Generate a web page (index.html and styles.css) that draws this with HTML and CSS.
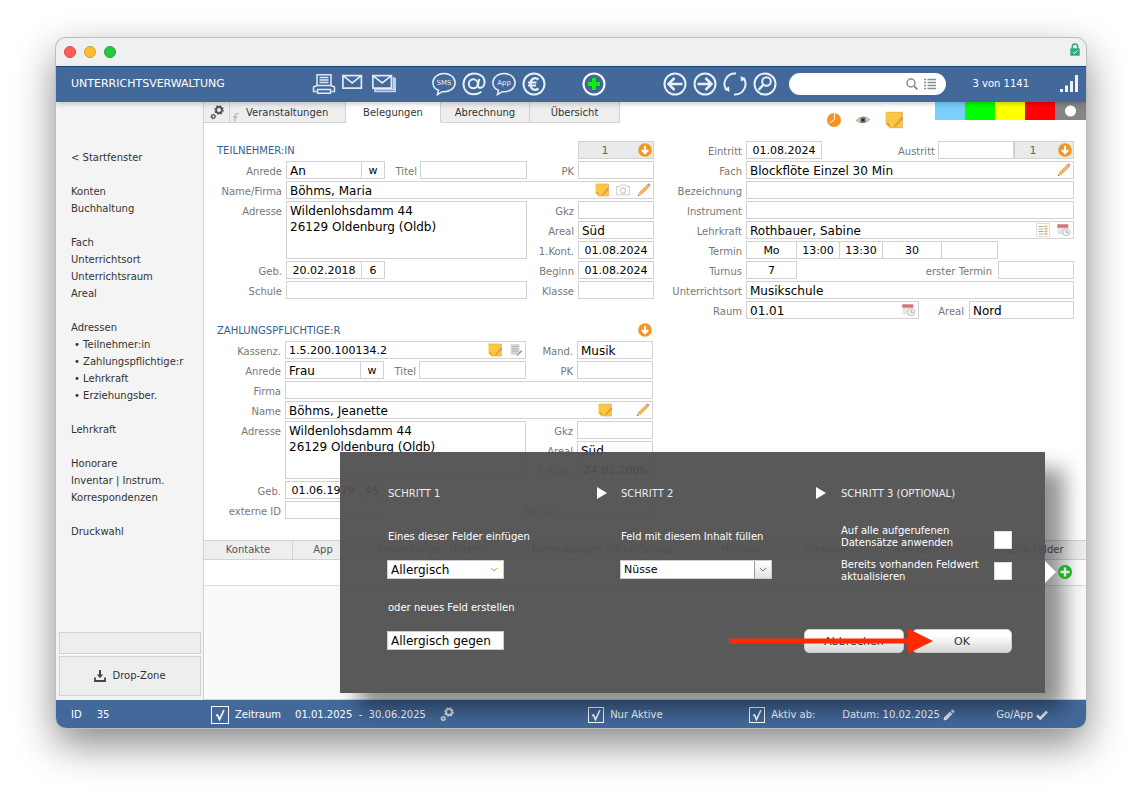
FILE: index.html
```html
<!DOCTYPE html>
<html lang="de">
<head>
<meta charset="utf-8">
<title>Unterrichtsverwaltung</title>
<link rel="stylesheet" href="styles.css">
</head>
<body>
<svg class="sprite" aria-hidden="true">
  <symbol id="down" viewBox="0 0 14 14"><circle cx="7" cy="7" r="6.8" fill="#f7941e"/><path d="M7 2.800v7M3.800 7 7 10.200 10.200 7" fill="none" stroke="#fff" stroke-width="2.100"/></symbol>
  <symbol id="note" viewBox="0 0 14 14"><path d="M.5 1h13v12H3.500l-3-3z" fill="#fbc740"/><path d="M.5 9.500h3.200V13z" fill="#e2a226"/><path d="M.5 1h13v12H3.500" fill="none" stroke="#e0b050" stroke-width=".7"/><path d="m7 11.500 5-6 1.500 1.200-5 5.300-2 .6z" fill="#e99a3d"/><path d="m12 5.500 1-1 1 1-.8 1.200z" fill="#a58fc0"/></symbol>
  <symbol id="pencil" viewBox="0 0 14 14"><path d="m2 9.500 8-8 2.500 2.300-8.200 8L.8 13.200z" fill="#f2a541"/><path d="m3 10.500 8-8" stroke="#fbd089"/><path d="m2 9.500 2.300 2.300-3.500 1.400z" fill="#e6c79c"/><path d="m.8 13.200.6-1.500.9.9z" fill="#444"/><path d="m10 1.500 1-1q1.500-.5 2.500 1.200l-1 2z" fill="#b59ac4"/></symbol>
  <symbol id="camera" viewBox="0 0 14 12"><path d="M.6 2.600h3l1-1.600h4.800l1 1.600h3v8.200H.6z" fill="none" stroke="#ccc"/><circle cx="7" cy="6.500" r="2.600" fill="none" stroke="#ccc" stroke-width="1.200"/></symbol>
  <symbol id="doc" viewBox="0 0 12 12"><path d="M1.500 1h7.500v9H1.500z" fill="#d5d5d5"/><path d="M2.500 3h5.500M2.500 5h5.500M2.500 7h5.500" stroke="#bbb"/><path d="m6 11 4.500-5 1 1-4 4z" fill="#8fa5b8"/></symbol>
  <symbol id="list" viewBox="0 0 14 14"><path d="M.5.500h13v13H.5z" fill="#fff" stroke="#ddd"/><path d="M2.500 3.500h5M2.500 6h5M2.500 8.500h5M2.500 11h5" stroke="#aaa"/><path d="M8.500 3.500h3M8.500 6h3M8.500 8.500h3M8.500 11h3" stroke="#f3ad45" stroke-width="1.500"/></symbol>
  <symbol id="cal" viewBox="0 0 14 13"><path d="M.5 3h10.500v8H.5z" fill="#e6e6e6"/><path d="M.3.800h11v3.400H.3z" fill="#d9717b"/><circle cx="9.300" cy="8.700" r="3.700" fill="#f0f0f0" stroke="#c6c6c6"/><path d="M9.300 6.500v2.400h2" stroke="#aaa" fill="none"/></symbol>
  <symbol id="gears" viewBox="0 0 14 15"><circle cx="9" cy="5" r="3" fill="none" stroke="currentColor" stroke-width="1.900"/><circle cx="9" cy="5" r="4.200" fill="none" stroke="currentColor" stroke-width="1.200" stroke-dasharray="1.700 1.600"/><circle cx="3.300" cy="11.500" r="1.700" fill="none" stroke="currentColor" stroke-width="1.300"/><circle cx="3.300" cy="11.500" r="2.500" fill="none" stroke="currentColor" stroke-width=".7" stroke-dasharray="1.200 1"/></symbol>
  <symbol id="play" viewBox="0 0 10 12"><path d="M0 0 10 6 0 12z" fill="#fff"/></symbol>
</svg>

<div class="window">
  <div class="titlebar">
    <span class="dot red"></span><span class="dot amber"></span><span class="dot green"></span>
    <svg class="lock" viewBox="0 0 10 13"><path d="M2.300 6V3.700a2.700 2.700 0 0 1 5.400 0V6" fill="none" stroke="#35a97a" stroke-width="1.500"/><rect x=".3" y="5.300" width="9.400" height="7.500" rx=".6" fill="#35a97a"/><path d="m3 9 1.500 1.500L7.300 7.500" fill="none" stroke="#fff"/></svg>
  </div>

  <header class="toolbar">
    <h1>UNTERRICHTSVERWALTUNG</h1>
    <div class="tools">
      <button aria-label="Drucken"><svg viewBox="0 0 24 24"><g fill="none" stroke="#dfe8f3" stroke-width="1.500"><path d="M5 13V2.800h14V13M7.500 5.500h9M7.500 8h9M7.500 10.500h9"/><path d="M5 13.500 1.500 15v4.500h3M19 13.500l3.500 1.500v4.500h-3"/><path d="M5.500 17.500h13v3.800h-13zM5 13.500h14"/></g></svg></button>
      <button aria-label="E-Mail"><svg viewBox="0 0 24 24"><path d="M.9 3.700h18.500v12.500H.9zL10.200 11l9.200-7.300" fill="none" stroke="#dfe8f3" stroke-width="1.700"/></svg></button>
      <button aria-label="Serien-E-Mail"><svg viewBox="0 0 24 24"><path d="M3 18v1.500h20.200V6.500H22M2 17.500h19.500V5" fill="none" stroke="#c3d2e5" stroke-width="1.700"/><path d="M.9 3.700h18.500v12.500H.9zL10.200 11l9.200-7.300" fill="none" stroke="#dfe8f3" stroke-width="1.700"/></svg></button>
    </div>
    <div class="tools">
      <button aria-label="SMS"><svg viewBox="0 0 24 24"><path d="M6.500 18.300C3 17 .9 14 .9 10.800.9 5.800 5.500 1.500 12 1.500s11.100 4.300 11.100 9.300-4.600 9-11.100 9q-1 0-1.800-.1L5.500 22.600z" fill="none" stroke="#e8eff7" stroke-width="1.500"/><text x="12" y="13" class="bubble">SMS</text></svg></button>
      <button aria-label="Nachricht"><svg viewBox="0 0 24 24"><circle cx="11.300" cy="11.800" r="4.500" fill="none" stroke="#e8eff7" stroke-width="1.900"/><path d="M17.200 6.800 16 13.500c-.6 3.500 6 3.200 6.500-2.500C23 5 18 1.500 12.500 1.500 6 1.500 1.500 6 1.500 12s4.200 10.300 10 10.300c3.500 0 6-1 8-2.500" fill="none" stroke="#e8eff7" stroke-width="1.900"/></svg></button>
      <button aria-label="App"><svg viewBox="0 0 24 24"><path d="M6.500 18.300C3 17 .9 14 .9 10.800.9 5.800 5.500 1.500 12 1.500s11.100 4.300 11.100 9.300-4.600 9-11.100 9q-1 0-1.800-.1L5.500 22.600z" fill="none" stroke="#e8eff7" stroke-width="1.500"/><text x="12" y="13" class="bubble">App</text></svg></button>
      <button aria-label="Euro"><svg viewBox="0 0 24 24"><circle cx="12" cy="12" r="10.500" fill="none" stroke="#e8eff7" stroke-width="2"/><path d="M16.500 7.500C12.500 4.500 8.500 7 8.500 12s4 7.500 8 4.500M6 10.500h8.500M6 13.500h8" fill="none" stroke="#e8eff7" stroke-width="2.200"/></svg></button>
    </div>
    <div class="tools">
      <button aria-label="Neu"><svg viewBox="0 0 24 24"><circle cx="12" cy="12" r="10.500" fill="none" stroke="#fff" stroke-width="2"/><path d="M12.500 6.500v12M6.500 12.500h12" stroke="#2c5a66" stroke-width="4"/><path d="M12 6v12M6 12h12" stroke="#0df00d" stroke-width="4"/></svg></button>
    </div>
    <div class="tools nav">
      <button aria-label="Zurück"><svg viewBox="0 0 24 24"><g fill="none" stroke="#e8eff7" stroke-width="2"><circle cx="12" cy="12" r="10.500"/><path d="M19.500 12H5.500M11.500 6l-6 6 6 6" stroke-width="2.500"/></g></svg></button>
      <button aria-label="Vor"><svg viewBox="0 0 24 24"><g fill="none" stroke="#e8eff7" stroke-width="2"><circle cx="12" cy="12" r="10.500"/><path d="M4.500 12h14M12.500 6l6 6-6 6" stroke-width="2.500"/></g></svg></button>
      <button aria-label="Aktualisieren"><svg viewBox="0 0 24 24"><g fill="none" stroke="#e8eff7" stroke-width="2"><path d="M13 1.500A10.500 10.500 0 0 0 3.700 18.300M11 22.500A10.500 10.500 0 0 0 20.300 5.700"/></g><path d="m1 17 5.500 3-.5-5.500zM23 7l-5.500-3 .5 5.500z" fill="#e8eff7"/></svg></button>
      <button aria-label="Suchen"><svg viewBox="0 0 24 24"><g fill="none" stroke="#e8eff7" stroke-width="2"><circle cx="12" cy="12" r="10.500"/><circle cx="13.500" cy="9.500" r="4.300"/><path d="m10.500 12.500-5 5.500" stroke-width="2.500"/></g></svg></button>
    </div>
    <div class="search">
      <input type="search" aria-label="Suche">
      <svg class="i-mag" viewBox="0 0 12 12"><circle cx="5" cy="5" r="4" fill="none" stroke="#8a8a8a" stroke-width="1.500"/><path d="m8 8 3.500 3.500" stroke="#8a8a8a" stroke-width="1.800"/></svg>
      <svg class="i-mag" viewBox="0 0 12 12"><path d="M0 1.500h2M0 4.500h2M0 7.500h2M0 10.500h2M3.500 1.500H12M3.500 4.500H12M3.500 7.500H12M3.500 10.500H12" stroke="#8a8a8a" stroke-width="1.300"/></svg>
    </div>
    <span class="counter">3 von 1141</span>
    <svg class="bars" viewBox="0 0 20 20"><path d="M1 15h3v3H1zM6 11.500h3V18H6zM11 7h3v11h-3zM16 1h3v17h-3z" fill="#eef3f9"/></svg>
  </header>

  <div class="body">
    <aside class="sidebar">
      <nav>
        <ul><li><a href="#">&lt; Startfenster</a></li></ul>
        <ul><li><a href="#">Konten</a></li><li><a href="#">Buchhaltung</a></li></ul>
        <ul><li><a href="#">Fach</a></li><li><a href="#">Unterrichtsort</a></li><li><a href="#">Unterrichtsraum</a></li><li><a href="#">Areal</a></li></ul>
        <ul><li><a href="#">Adressen</a></li><li class="sub"><a href="#">• Teilnehmer:in</a></li><li class="sub"><a href="#">• Zahlungspflichtige:r</a></li><li class="sub"><a href="#">• Lehrkraft</a></li><li class="sub"><a href="#">• Erziehungsber.</a></li></ul>
        <ul><li><a href="#">Lehrkraft</a></li></ul>
        <ul><li><a href="#">Honorare</a></li><li><a href="#">Inventar | Instrum.</a></li><li><a href="#">Korrespondenzen</a></li></ul>
        <ul><li><a href="#">Druckwahl</a></li></ul>
      </nav>
      <div class="slot"></div>
      <button class="dropzone"><svg viewBox="0 0 12 12"><path d="M1 7.500v3.500h10V7.500" fill="none" stroke="#444" stroke-width="1.800"/><path d="M6 0v5" stroke="#444" stroke-width="2"/><path d="M2.800 4.500h6.400L6 8.200z" fill="#444"/></svg>Drop-Zone</button>
    </aside>

    <main class="main">
      <div class="top">
        <div class="tabs">
          <button class="tab gear" aria-label="Einstellungen"><svg class="i15"><use href="#gears"/></svg></button>
          <button class="tab wide"><svg class="hook" viewBox="0 0 8 10"><path d="M3 9.500V3.500q0-2 3.500-2M1 5h4.500" fill="none" stroke="#bbb" stroke-width="1.500"/></svg>Veranstaltungen</button>
          <button class="tab active">Belegungen</button>
          <button class="tab">Abrechnung</button>
          <button class="tab last">Übersicht</button>
        </div>
        <div class="status">
          <svg class="i14" viewBox="0 0 14 14"><circle cx="7" cy="7" r="7" fill="#f7941e"/><path d="M7.500 0v6.500L2.800 9.800" fill="none" stroke="#fff"/></svg>
          <svg class="i14" viewBox="0 0 14 14"><path d="M.5 7.500Q6.500 1 13.500 6.500 7 12.500.5 7.500z" fill="#e9dcc6" stroke="#b9874f"/><circle cx="7" cy="7" r="3" fill="#5b7f9d"/><circle cx="7" cy="7" r="1.500" fill="#1c2733"/></svg>
          <svg class="i18"><use href="#note"/></svg>
        </div>
        <div class="colors"><span class="sky"></span><span class="lime"></span><span class="yellow"></span><span class="scarlet"></span><span class="gray"></span></div>
      </div>

      <div class="forms">
        <div class="left">
          <section class="grid">
            <h2>TEILNEHMER:IN</h2>
            <div class="field count"><span>1</span><svg class="i14"><use href="#down"/></svg></div>
            <label for="a1">Anrede</label>
            <div class="row"><input id="a1" class="w76" value="An"><input class="w24 c join" aria-label="Geschlecht" value="w"><label for="a2" class="push">Titel</label><input id="a2" class="w107"></div>
            <label for="a3">PK</label><input id="a3">
            <label for="a4">Name/Firma</label>
            <div class="field span"><input id="a4" value="Böhms, Maria"><svg class="i14"><use href="#note"/></svg><svg class="i14"><use href="#camera"/></svg><svg class="i14"><use href="#pencil"/></svg></div>
            <label for="a5">Adresse</label>
            <textarea id="a5">Wildenlohsdamm 44
26129 Oldenburg (Oldb)</textarea>
            <label for="a6">Gkz</label><input id="a6">
            <label for="a7" class="c3">Areal</label><input id="a7" value="Süd">
            <label for="a8" class="c3">1.Kont.</label><input id="a8" class="c" value="01.08.2024">
            <label for="a9">Geb.</label>
            <div class="row"><input id="a9" class="w76 c" value="20.02.2018"><input class="w24 c join" aria-label="Alter" value="6"></div>
            <label for="a10">Beginn</label><input id="a10" class="c" value="01.08.2024">
            <label for="a11">Schule</label><input id="a11">
            <label for="a12">Klasse</label><input id="a12">
          </section>

          <section class="grid second">
            <h2>ZAHLUNGSPFLICHTIGE:R</h2>
            <div class="bare"><svg class="i14"><use href="#down"/></svg></div>
            <label for="b1">Kassenz.</label>
            <div class="field"><input id="b1" class="num" value="1.5.200.100134.2"><svg class="i14"><use href="#note"/></svg><svg class="i14"><use href="#doc"/></svg></div>
            <label for="b2">Mand.</label><input id="b2" value="Musik">
            <label for="b3">Anrede</label>
            <div class="row"><input id="b3" class="w76" value="Frau"><input class="w24 c join" aria-label="Geschlecht" value="w"><label for="b4" class="push">Titel</label><input id="b4" class="w107"></div>
            <label for="b5">PK</label><input id="b5">
            <label for="b6">Firma</label><input id="b6" class="span">
            <label for="b7">Name</label>
            <div class="field span far"><input id="b7" value="Böhms, Jeanette"><svg class="i14"><use href="#note"/></svg><svg class="i14"><use href="#pencil"/></svg></div>
            <label for="b8">Adresse</label>
            <textarea id="b8">Wildenlohsdamm 44
26129 Oldenburg (Oldb)</textarea>
            <label for="b9">Gkz</label><input id="b9">
            <label for="b10" class="c3">Areal</label><input id="b10" value="Süd">
            <label for="b11" class="c3">1.Kont.</label><input id="b11" class="c" value="24.02.2006">
            <label for="b12">Geb.</label>
            <div class="row span"><input id="b12" class="w76 c" value="01.06.1979"><input class="w24 c join" aria-label="Alter" value="45"></div>
            <label for="b13">externe ID</label>
            <div class="row span"><input id="b13" class="w99"><label for="b14" class="push">GP-ID</label><input id="b14" class="w99"></div>
          </section>
        </div>

        <section class="right">
          <label for="c1">Eintritt</label>
          <div class="row"><input id="c1" class="w76 c" value="01.08.2024"><label for="c2" class="push">Austritt</label><input id="c2" class="w76"><div class="field count w60"><span>1</span><svg class="i14"><use href="#down"/></svg></div></div>
          <label for="c3">Fach</label>
          <div class="field"><input id="c3" value="Blockflöte Einzel 30 Min"><svg class="i14"><use href="#pencil"/></svg></div>
          <label for="c4">Bezeichnung</label><input id="c4">
          <label for="c5">Instrument</label><input id="c5">
          <label for="c6">Lehrkraft</label>
          <div class="field"><input id="c6" value="Rothbauer, Sabine"><svg class="i14"><use href="#list"/></svg><svg class="i14"><use href="#cal"/></svg></div>
          <label for="c7">Termin</label>
          <div class="row"><input id="c7" class="w51 c" value="Mo"><input class="w44 c join" aria-label="Von" value="13:00"><input class="w44 c join" aria-label="Bis" value="13:30"><input class="w60 c join" aria-label="Dauer" value="30"><input class="w57 join" aria-label="Zusatz"></div>
          <label for="c8">Turnus</label>
          <div class="row"><input id="c8" class="w51 c" value="7"><label for="c9" class="first">erster Termin</label><input id="c9" class="w76"></div>
          <label for="c10">Unterrichtsort</label><input id="c10" value="Musikschule">
          <label for="c11">Raum</label>
          <div class="row"><div class="field grow"><input id="c11" value="01.01"><svg class="i14"><use href="#cal"/></svg></div><label for="c12" class="room">Areal</label><input id="c12" class="w105" value="Nord"></div>
        </section>
      </div>

      <div class="subtabs">
        <button class="s89">Kontakte</button><button class="s61">App</button><button class="s157">Bemerkungen (Intern)</button><button class="s189">Bemerkungen (iMikelGo/App)</button><button class="s82">Historie</button><button class="s89">Vorspiele</button><button class="s102">VdM-Bericht</button><button class="rest">Eigene Felder</button>
      </div>
      <div class="entry"></div>
      <div class="blank"></div>
    </main>

    <form class="dialog">
      <div class="step">
        <h3>SCHRITT 1</h3>
        <label for="d1">Eines dieser Felder einfügen</label>
        <select id="d1" class="plain"><option>Allergisch</option></select>
        <label for="d2">oder neues Feld erstellen</label>
        <input id="d2" class="text" value="Allergisch gegen">
      </div>
      <svg class="play"><use href="#play"/></svg>
      <div class="step two">
        <h3>SCHRITT 2</h3>
        <label for="d3">Feld mit diesem Inhalt füllen</label>
        <select id="d3" class="boxed"><option>Nüsse</option></select>
      </div>
      <svg class="play"><use href="#play"/></svg>
      <div class="step three">
        <h3>SCHRITT 3 (OPTIONAL)</h3>
        <div class="opt"><label for="d4">Auf alle aufgerufenen Datensätze anwenden</label><input type="checkbox" id="d4"></div>
        <div class="opt"><label for="d5">Bereits vorhanden Feldwert aktualisieren</label><input type="checkbox" id="d5"></div>
        <div class="actions"><button type="button">Abbrechen</button><button type="button">OK</button></div>
      </div>
      <svg class="pointer" viewBox="0 0 204 26"><path d="M0 10.500h179V.5L204 13l-25 12.500v-10H0z" fill="#ff2a00"/></svg>
      <span class="tip"></span>
      <svg class="add" viewBox="0 0 14 14"><circle cx="7" cy="7" r="7" fill="#1fae25"/><path d="M7 2.500v9M2.500 7h9" stroke="#e4e4e4" stroke-width="2.400"/></svg>
    </form>
  </div>

  <footer class="footer">
    <span class="id"><span>ID</span><span>35</span></span>
    <span class="period"><input type="checkbox" id="f1" class="big" checked><label for="f1">Zeitraum</label><span class="dates">01.01.2025&nbsp; -&nbsp; 30.06.2025</span><svg class="i15"><use href="#gears"/></svg></span>
    <span class="only"><input type="checkbox" id="f2" checked><label for="f2">Nur Aktive</label></span>
    <span class="from"><input type="checkbox" id="f3" checked><label for="f3">Aktiv ab:</label></span>
    <span class="date">Datum: 10.02.2025<svg viewBox="0 0 12 12"><path d="m.5 11.500.7-3.300 5.800-5.700 2.500 2.500-5.700 5.800zM7.800 1.700 9.300.300l2.400 2.400-1.500 1.500z" fill="#dfe5ec"/></svg></span>
    <span class="go">Go/App<svg viewBox="0 0 12 12"><path d="m1 6.500 3.300 3L11 2.500" fill="none" stroke="#e6ebf2" stroke-width="2.600"/></svg></span>
  </footer>
</div>
</body>
</html>
```
FILE: styles.css
```css
* { box-sizing: border-box; }
body {
  margin: 0;
  min-height: 100vh;
  padding: 38px 56px 74px;
  display: flex;
  background: #fff;
  color: #333;
  font: 10px/12px Verdana, "DejaVu Sans", sans-serif;
}
h1, h2, h3, ul { margin: 0; padding: 0; font-size: 10px; font-weight: 400; list-style: none; }
button, input, select, textarea { font: inherit; color: inherit; margin: 0; }
button { border: 0; background: none; padding: 0; }
a { color: inherit; text-decoration: none; }
svg { display: block; flex: none; }
.sprite { position: absolute; width: 0; height: 0; }

.window {
  flex: 1;
  min-width: 0;
  display: flex;
  flex-direction: column;
  border-radius: 10px;
  overflow: hidden;
  box-shadow: 0 0 0 1px #bdbdbd, 0 16px 40px rgba(0, 0, 0, .48);
}
.titlebar { height: 28px; background: #eff0f2; display: flex; align-items: center; gap: 8px; padding: 0 6px 0 8px; }
.dot { width: 12px; height: 12px; border-radius: 50%; border: 1px solid; }
.red { background: #ff5f57; border-color: #e0443e; }
.amber { background: #febc2e; border-color: #dea123; }
.green { background: #28c840; border-color: #1aab29; }
.lock { width: 10px; height: 13px; margin: 0 0 6px auto; }

.toolbar {
  height: 36px;
  background: #43699b;
  border-top: 1px solid #1d4475;
  color: #fff;
  display: flex;
  align-items: center;
  padding: 0 7px 1px 15px;
  position: relative;
  z-index: 1;
  box-shadow: 0 2px 5px rgba(0, 0, 0, .2);
}
h1 { width: 241px; font-size: 11px; }
.tools { display: flex; gap: 6px; margin-right: 36px; }
.tools + .tools + .tools { margin-right: 57px; }
.tools + .tools + .nav { margin-right: 12px; }
.tools button, .tools svg { width: 24px; height: 24px; }
.bubble { font-size: 7px; fill: #e8eff7; text-anchor: middle; }
.search { flex: 1; min-width: 0; height: 22px; border-radius: 11px; background: #fff; display: flex; align-items: center; gap: 6px; padding: 0 10px; }
.search input { flex: 1; min-width: 0; border: 0; background: none; outline: 0; color: #333; }
.i-mag { width: 12px; height: 12px; }
.counter { margin: 0 30px 0 26px; }
.bars { width: 20px; height: 20px; }

.body { flex: 1; display: flex; position: relative; background: #fff; }
.sidebar { width: 148px; flex: none; background: #f4f4f4; border-right: 1px solid #d2d2d2; display: flex; flex-direction: column; padding: 47px 2px 4px 3px; }
.sidebar nav { flex: 1; padding-left: 12px; line-height: 17px; display: flex; flex-direction: column; gap: 17px; }
.sub { padding-left: 3px; }
.slot, .dropzone { border: 1px solid #d2d2d2; background: #eee; }
.slot { height: 22px; margin-bottom: 2px; }
.dropzone { height: 40px; display: flex; align-items: center; justify-content: center; gap: 6px; }
.dropzone svg { width: 12px; height: 12px; }

.main { flex: 1; min-width: 0; display: flex; flex-direction: column; }
.top { display: flex; height: 39px; }
.tabs { display: flex; height: 21px; flex: 1; }
.tab { width: 89px; background: #eee; border: solid #d2d2d2; border-width: 0 1px 1px 0; padding-top: 1px; }
.tab.last { width: 90px; }
.tab.gear { width: 26px; color: #555; display: flex; align-items: center; justify-content: center; }
.tab.wide { width: 116px; display: flex; align-items: center; gap: 6px; padding-left: 2px; }
.tab.active { width: 95px; background: #fff; border-bottom-color: #fff; }
.hook { width: 8px; height: 10px; align-self: flex-end; }
.i15 { width: 14px; height: 15px; }
.i14 { width: 14px; height: 14px; }
.i18 { width: 18px; height: 18px; }
.status { display: flex; align-items: center; gap: 15px; height: 36px; margin-right: 32px; }
.colors { display: flex; height: 18px; }
.colors span { width: 30px; }
.sky { background: #79d0fb; }
.lime { background: #0f0; }
.yellow { background: #ff0; }
.scarlet { background: red; }
.colors .gray { width: 31px; background: radial-gradient(circle at 50% 50%, #fff 5px, #858585 6px); }

.forms { display: grid; grid-template-columns: 437px minmax(0, 1fr); gap: 18px; padding: 0 12px 0 13px; flex: none; }
.grid { display: grid; grid-template-columns: 65px 241px 43px 76px; grid-auto-rows: 18px; gap: 2px 4px; }
.grid.second { grid-template-columns: 64px 241px 43px 76px; margin-top: 22px; }
.right { display: grid; grid-template-columns: 70px minmax(0, 1fr); grid-auto-rows: 18px; gap: 2px 4px; align-content: start; }
.forms label { color: #777; text-align: right; line-height: 22px; white-space: nowrap; }
h2 { grid-column: 1 / 4; color: #2f6296; line-height: 20px; }
.forms input, .forms textarea, .field {
  width: 100%;
  min-width: 0;
  height: 18px;
  border: 1px solid #d2d2d2;
  border-radius: 0;
  background: #fff;
  color: #000;
  padding: 1px 3px 0;
  outline: 0;
  font-size: 12px;
  line-height: 16px;
}
.forms textarea { grid-row: span 3; height: auto; resize: none; overflow: hidden; }
.field { display: flex; align-items: center; gap: 7px; padding: 0 2px 0 0; }
.forms .field input { border: 0; height: 16px; flex: 1; background: none; }
.far { gap: 24px; }
.span { grid-column: 2 / 5; }
.c3 { grid-column: 3; }
.row { display: flex; min-width: 0; }
.row > input, .row > .field { flex: none; }
.row .push { margin: 0 3px 0 auto; }
.row .first { margin: 0 6px 0 auto; }
.forms .c { text-align: center; padding: 1px 0 0; font-size: 11px; }
.forms .num { font-size: 11px; }
.forms .join { margin-left: -1px; }
.forms .w24 { width: 24px; }
.forms .w44 { width: 44px; }
.forms .w51 { width: 51px; }
.forms .w57 { width: 57px; }
.forms .w60 { width: 60px; }
.forms .w76 { width: 76px; }
.forms .w99 { width: 99px; }
.forms .w105 { width: 105px; }
.forms .w107 { width: 107px; }
.row > .grow { flex: 1; }
.row .room { width: 50px; padding-right: 5px; }
.forms .count { background: #eaeaea; color: #666; padding: 0 1px 0 0; font-size: 11px; }
.count span { flex: 1; text-align: center; padding-top: 1px; }
.bare { display: flex; justify-content: flex-end; align-items: center; padding-right: 1px; }

.subtabs { display: flex; height: 20px; margin-top: 21px; background: #eee; border: solid #d2d2d2; border-width: 1px 0; color: #555; }
.subtabs button { flex: none; border-right: 1px solid #d2d2d2; white-space: nowrap; }
.s61 { width: 61px; }
.s82 { width: 82px; }
.s89 { width: 89px; }
.s102 { width: 102px; }
.s157 { width: 157px; }
.s189 { width: 189px; }
.subtabs .rest { flex: 1; border: 0; }
.entry { height: 26px; border-bottom: 1px solid #ddd; }
.blank { flex: 1; background: #fafafa; border-bottom: 1px solid #d2d2d2; }

.dialog {
  position: absolute;
  left: 284px;
  right: 41px;
  bottom: 7px;
  height: 241px;
  z-index: 2;
  display: flex;
  padding: 35px 33px 0 47px;
  background: rgba(79, 79, 79, .945);
  color: #fff;
  box-shadow: 19px 17px 20px rgba(0, 0, 0, .43);
}
.step { flex: none; width: 210px; display: flex; flex-direction: column; align-items: flex-start; }
.two { width: 196px; margin-left: 13px; }
.three { flex: 1; width: auto; min-width: 0; margin-left: 14px; }
.step h3, .step > label { line-height: 14px; padding-left: 1px; color: #eee; }
.step > label { color: #fff; }
.step h3 + label { margin-top: 29px; }
.step select + label { margin-top: 22px; }
.play { width: 10px; height: 12px; }
.step select, .text { height: 19px; margin-top: 16px; border: 1px solid #ccc; border-radius: 0; background: #fff; color: #000; padding: 0 3px; font-size: 12px; line-height: 16px; appearance: none; outline: 0; }
.plain, .text { width: 117px; }
.step .plain { background: url("data:image/svg+xml,%3Csvg xmlns='http://www.w3.org/2000/svg' width='8' height='6'%3E%3Cpath d='M1 1l3 3 3-3' fill='none' stroke='%23f0a030'/%3E%3C/svg%3E") no-repeat right 5px center #fff; }
.step .boxed {
  width: 152px;
  font-size: 11px;
  background:
    url("data:image/svg+xml,%3Csvg xmlns='http://www.w3.org/2000/svg' width='8' height='6'%3E%3Cpath d='M1 1l3 3 3-3' fill='none' stroke='%23777'/%3E%3C/svg%3E") no-repeat right 4px center,
    linear-gradient(90deg, #999 1px, transparent 1px) no-repeat right / 17px 100%,
    linear-gradient(#fff, #e2e2e2) no-repeat right / 17px 100%,
    #fff;
}
.opt { display: flex; align-self: stretch; justify-content: space-between; align-items: center; padding-left: 1px; margin-top: 10px; }
h3 + .opt { margin-top: 24px; align-items: flex-end; }
.opt label { width: 144px; }
.opt input { appearance: none; width: 18px; height: 18px; background: #fff; border: 1px solid #ddd; }
.actions { display: flex; align-self: stretch; justify-content: flex-end; gap: 8px; margin-top: 46px; }
.actions button { flex: none; width: 100px; height: 24px; padding-top: 2px; border-radius: 5px; background: linear-gradient(#fff 25%, #d6d6d6); border: 1px solid #ccc; color: #333; font-size: 11px; }
.pointer { position: absolute; width: 204px; height: 26px; right: 112px; bottom: 39px; }
.tip { position: absolute; left: 100%; top: 109px; width: 11px; height: 22px; background: #fff; clip-path: polygon(0 0, 100% 50%, 0 100%); }
.add { position: absolute; width: 14px; height: 14px; right: -27px; top: 113px; }

.footer { height: 28px; background: #43699b; color: #fff; display: flex; align-items: center; padding: 1px 38px 0 15px; }
.footer > span { display: flex; align-items: center; }
.id { width: 140px; gap: 15px; }
.period { flex: 377; }
.only { flex: 161; }
.from { flex: 93; white-space: nowrap; }
.date { width: 154px; gap: 3px; }
.go { gap: 3px; }
.date svg, .go svg { width: 12px; height: 12px; }
.footer label { margin-left: 6px; }
.dates { margin: 0 14px; }
.period svg { color: #dfe5ec; }
.footer input {
  appearance: none;
  width: 16px;
  height: 16px;
  border: 1px solid #fff;
  background: url("data:image/svg+xml,%3Csvg xmlns='http://www.w3.org/2000/svg' width='12' height='12'%3E%3Cpath d='M2 6.500l1.500-.5 2 4.500L10 1' fill='none' stroke='%23fff' stroke-width='1.600'/%3E%3C/svg%3E") no-repeat center;
}
.footer .big { width: 18px; height: 18px; }
```
